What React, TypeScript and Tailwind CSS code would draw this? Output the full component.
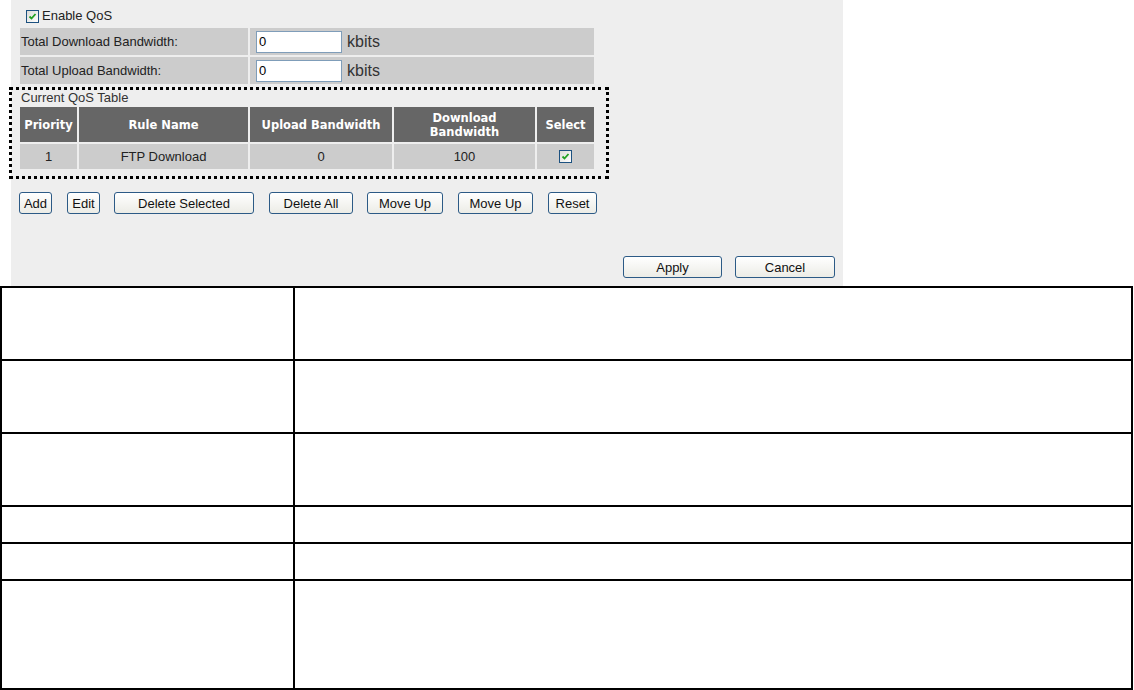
import React from 'react';

const CheckBox = () => (
  <span className="inline-flex w-[13px] h-[13px] border border-[#1c5180] bg-gradient-to-br from-[#dcdcd7] to-white items-center justify-center">
    <svg width="9" height="9" viewBox="0 0 9 9">
      <path d="M1.5 4.5 L3.5 6.5 L7.5 2" fill="none" stroke="#21a121" strokeWidth="1.8" />
    </svg>
  </span>
);

const Btn = ({ label, ml, w, h = 22 }: { label: string; ml: number; w: number; h?: number }) => (
  <button
    type="button"
    style={{ marginLeft: ml, width: w, height: h }}
    className="border border-[#2c5a86] rounded-[3px] bg-gradient-to-b from-white to-[#ecece6] text-[13px] leading-none text-[#111]"
  >
    {label}
  </button>
);

const actionButtons: [string, number, number][] = [
  ['Add', -1, 33],
  ['Edit', 15, 33],
  ['Delete Selected', 14, 140],
  ['Delete All', 15, 84],
  ['Move Up', 14, 76],
  ['Move Up', 15, 75],
  ['Reset', 15, 49],
];

const BandwidthRow = ({ label }: { label: string }) => (
  <div className="flex gap-[2px] w-[574px] h-[27px]">
    <div className="w-[228px] bg-[#cccccc] pl-[1px] flex items-center text-[13px] text-[#222]">{label}</div>
    <div className="flex-1 bg-[#cccccc] flex items-center pl-[6px] gap-[5px]">
      <input
        type="text"
        defaultValue="0"
        className="w-[86px] h-[22px] border border-[#7f9db9] bg-white px-[2px] text-[13px] text-black outline-none"
      />
      <span className="text-[16px] text-[#333]">kbits</span>
    </div>
  </div>
);

const rowHeights = [73, 73, 73, 37, 37, 109];

export default function App() {
  return (
    <div className="w-[1134px] h-[690px] bg-white font-['Liberation_Sans',Arial,sans-serif] overflow-hidden">
      <div className="w-[832px] h-[286px] ml-[11px] bg-[#eeeeee] pt-[10px] pl-[9px] pr-[8px]">
        <div className="flex items-center h-[12px] pl-[6px] gap-[3px] text-[13px] text-[#222]">
          <CheckBox />
          <span>Enable QoS</span>
        </div>

        <div className="mt-[6px]">
          <BandwidthRow label="Total Download Bandwidth:" />
        </div>
        <div className="mt-[2px]">
          <BandwidthRow label="Total Upload Bandwidth:" />
        </div>

        <div className="mt-[3px] ml-[-11px] w-[600px] h-[92px] border-[3px] border-dotted border-black pl-[6px]">
          <div className="h-[15px] leading-[15px] pl-[3px] text-[13px] text-[#333]">Current QoS Table</div>
          <table className="border-separate border-spacing-[2px] table-fixed text-center">
            <thead>
              <tr className="h-[35px] bg-[#666666] text-white font-['DejaVu_Sans',Verdana,sans-serif] font-bold text-[11.5px] leading-[14px]">
                <th className="w-[57px] p-0">Priority</th>
                <th className="w-[169px] p-0">Rule Name</th>
                <th className="w-[142px] p-0">Upload Bandwidth</th>
                <th className="w-[141px] p-0">
                  Download
                  <br />
                  Bandwidth
                </th>
                <th className="w-[57px] p-0">Select</th>
              </tr>
            </thead>
            <tbody>
              <tr className="h-[25px] bg-[#cccccc] text-[13px] text-[#222]">
                <td className="p-0">1</td>
                <td className="p-0">FTP Download</td>
                <td className="p-0">0</td>
                <td className="p-0">100</td>
                <td className="p-0">
                  <div className="flex justify-center items-center">
                    <CheckBox />
                  </div>
                </td>
              </tr>
            </tbody>
          </table>
        </div>

        <div className="flex mt-[13px]">
          {actionButtons.map(([label, ml, w], i) => (
            <Btn key={i} label={label} ml={ml} w={w} />
          ))}
        </div>

        <div className="flex justify-end mt-[42px]">
          <Btn label="Apply" ml={0} w={99} h={22} />
          <Btn label="Cancel" ml={13} w={100} h={22} />
        </div>
      </div>

      <div className="w-[1133px] border-t-2 border-l-2 border-r-2 border-black">
        {rowHeights.map((h, i) => (
          <div key={i} style={{ height: h }} className="grid grid-cols-[293px_1fr] border-b-2 border-black">
            <div className="border-r-2 border-black"></div>
            <div></div>
          </div>
        ))}
      </div>
    </div>
  );
}
